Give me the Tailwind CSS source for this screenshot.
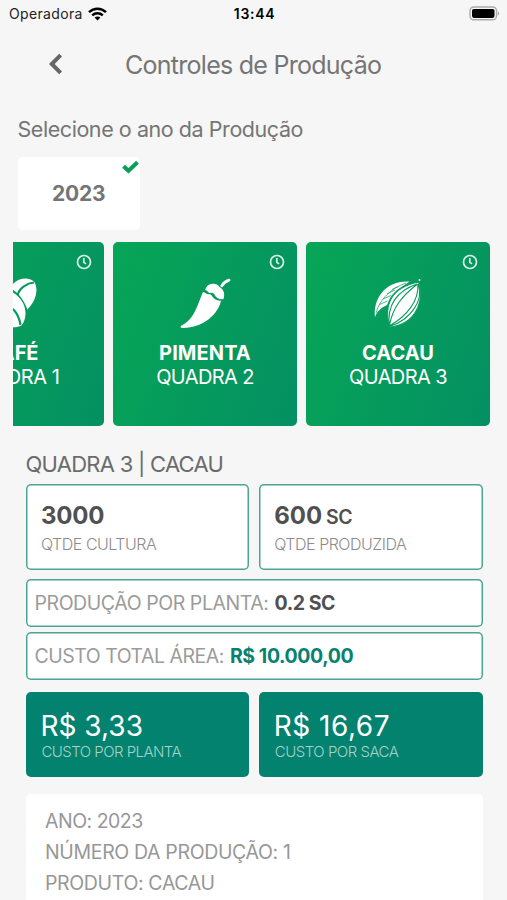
<!DOCTYPE html>
<html lang="pt-BR">
<head>
<meta charset="utf-8">
<title>Controles de Produção</title>
<script src="https://cdn.jsdelivr.net/npm/@tailwindcss/browser@4"></script>
</head>
<body class="h-[900px] w-[507px] overflow-hidden bg-[#f6f6f6] font-['Inter','Liberation_Sans',sans-serif] whitespace-nowrap text-[#757575]">

<!-- Status bar -->
<header class="grid h-7 grid-cols-3 items-center pr-[7px] pl-[9px] text-[14px] leading-7 text-black">
  <div class="flex items-center gap-[5px]">
    <span class="tracking-[0.35px] text-[#222]">Operadora</span>
    <svg class="-mt-px h-[14px] w-[19px]" viewBox="0 0 19 14" fill="none" stroke="#000" stroke-width="2.5"><path d="M1 5.2C5.9.6 13.100.6 18 5.200M4.200 8.300C7.200 5.500 11.800 5.500 14.800 8.300"/><path d="M9.500 13.500 6.600 10.600C8.300 9.100 10.700 9.100 12.400 10.600Z" fill="#000" stroke="none"/></svg>
  </div>
  <span class="text-center font-semibold tracking-[0.7px]">13:44</span>
  <svg class="-mt-[2px] h-[15px] w-[31px] justify-self-end" viewBox="0 0 31 15"><rect x="1" y="1" width="26.500" height="12.800" rx="3.800" fill="#f6f6f6" stroke="#aaa" stroke-width="1.400"/><rect x="3" y="2.900" width="22.500" height="9" rx="1.800"/><path d="M28.800 5.200c2 .8 2 3.600 0 4.400Z" fill="#aaa"/></svg>
</header>

<!-- Title bar -->
<div class="flex h-[72px] items-center pl-12">
  <svg class="h-[22px] w-[15px]" viewBox="0 0 15 22" fill="none" stroke="#666" stroke-width="4"><path d="M12.600 2.200 3.800 11l8.800 8.800"/></svg>
  <h1 class="ml-[62px] pt-px text-[25px] leading-8 tracking-[-0.73px]">Controles de Produção</h1>
</div>

<!-- Year picker -->
<section class="pt-[14px] pl-[17.5px]">
  <h2 class="text-[21.5px] leading-[31px] tracking-[-0.44px]">Selecione o ano da Produção</h2>
  <button class="relative mt-3 flex h-[73px] w-[122.500px] items-center justify-center rounded-[5px] bg-white text-[21px] font-bold tracking-[-0.2px]">2023
    <svg class="absolute top-[3px] right-[1px] h-[14px] w-[17px]" viewBox="0 0 17 14" fill="none" stroke="#0a9f58" stroke-width="4"><path d="M1.500 6.200 6.500 10.800 15.500 2.200"/></svg>
  </button>
</section>

<!-- Plots carousel -->
<section class="mt-3 ml-[13px] flex w-[477px] justify-end gap-[9px] overflow-hidden text-center text-[20px] leading-6 text-white">
  <article class="relative flex h-[184px] w-[184px] shrink-0 flex-col items-center rounded-[5px] bg-linear-[110deg] from-[#07a656] to-[#049063] pt-[35px]">
    <svg class="absolute top-[12px] right-[12px] size-4" viewBox="0 0 16 16" fill="none" stroke="#d9f3e6" stroke-width="1.700"><circle cx="8" cy="8" r="6.500"/><path d="M7.800 4v4.400l2.300 1.500"/></svg>
    <svg class="size-[52px]" viewBox="0 0 52 52" fill="#fff"><path d="M26 8C32 1 42-.5 48 4.500 52.500 11 51 23 41.500 32.500 38 24 34 17 26 12Z"/><path d="M48 5.500C41 6 33.500 11 31.500 18" fill="none" stroke="#059b5d" stroke-width="2.200"/><path d="M8 17C18 8 31 15 37 26 41 34 40 43 35.500 48.500 27 53 13 49 7 38 3 31 3 23 8 17Z"/><path d="M8 18C16 30 31 26 34.500 48" fill="none" stroke="#059b5d" stroke-width="2.200"/></svg>
    <h3 class="mt-[12px] font-bold">CAFÉ</h3>
    <p class="tracking-[-0.47px]">QUADRA 1</p>
  </article>
  <article class="relative flex h-[184px] w-[184px] shrink-0 flex-col items-center rounded-[5px] bg-linear-[110deg] from-[#07a656] to-[#049063] pt-[35px]">
    <svg class="absolute top-[12px] right-[12px] size-4" viewBox="0 0 16 16" fill="none" stroke="#d9f3e6" stroke-width="1.700"><circle cx="8" cy="8" r="6.500"/><path d="M7.800 4v4.400l2.300 1.500"/></svg>
    <svg class="size-[52px]" viewBox="0 0 52 52" fill="#fff"><path d="M24 15c2.500.2 3.500 2.700 5.800 2.300 1.600-.2 2.500.4 3.200 1.800 1.600 3 4.700 4.900 9 4.500C39.500 37 24 51.500 3 51c-1.800-.1-2-1.900-.4-2.400C16 42 18.500 27 24 15Z"/><path d="M26.300 12.700C27.500 5.800 37.500 4.700 40.500 10c4.500 2.500 5.800 7.500 3.800 12.200-4.500.3-7.500-1.200-8.800-4.700-1-1.400-2.700-2-4.600-1.400-1.900-.7-2.900-2.900-4.600-3.400Z"/><path d="M42.800 8.700C44.500 6 46.800 4.100 50 3.100" fill="none" stroke="#fff" stroke-width="2.800" stroke-linecap="round"/></svg>
    <h3 class="mt-[12px] font-bold tracking-[0.1px]">PIMENTA</h3>
    <p class="tracking-[-0.6px]">QUADRA 2</p>
  </article>
  <article class="relative flex h-[184px] w-[184px] shrink-0 flex-col items-center rounded-[5px] bg-linear-[110deg] from-[#07a656] to-[#049063] pt-[35px]">
    <svg class="absolute top-[12px] right-[12px] size-4" viewBox="0 0 16 16" fill="none" stroke="#d9f3e6" stroke-width="1.700"><circle cx="8" cy="8" r="6.500"/><path d="M7.800 4v4.400l2.300 1.500"/></svg>
    <svg class="size-[52px]" viewBox="0 0 52 52" fill="#fff"><path d="M3 40C1 21 14 3 37.500 4.500 32 9 23 12 17.500 22L15 28C9 31 5 34 3 40Z"/><path d="M4 36C8 22 18 12 34 6M7.500 27.500l8-3.500M11 22l8-3.500M15 17l8-4M20 12.500l6-3" fill="none" stroke="#059b5d" stroke-width=".7"/><path d="M46.500 5C53 24 43 48 17.300 50 12 27 19 11 46.500 5Z" stroke="#059b5d" stroke-width="1"/><path d="M45 7C25 14 15 28 17.300 49M46 7C47 24 35 39 17.300 49M46.500 7C52 24 38 43 18 49.300M45.500 7C30 19 21 30 17.500 48" fill="none" stroke="#059b5d" stroke-width="1.100"/><circle cx="47.500" cy="3" r="1"/></svg>
    <h3 class="mt-[12px] font-bold">CACAU</h3>
    <p class="tracking-[-0.6px]">QUADRA 3</p>
  </article>
</section>

<!-- Selected plot -->
<main class="pt-[26px] pr-[24.500px] pl-[25.500px]">
  <h2 class="text-[22px] leading-6 tracking-[-0.74px] text-[#6b6b6b]">QUADRA 3 | CACAU</h2>
  <div class="mt-2 grid grid-cols-2 gap-[9.500px]">
    <div class="h-[85.500px] rounded-[5px] bg-white pt-[17px] pl-[15.500px] shadow-[inset_0_0_0_1.5px_#4aa594]">
      <p class="text-[24px] leading-[30px] font-bold tracking-[-0.2px] text-[#505050]">3000</p>
      <p class="text-[16px] leading-[27px] font-light tracking-[-0.48px] text-[#8c8c8c]">QTDE CULTURA</p>
    </div>
    <div class="h-[85.500px] rounded-[5px] bg-white pt-[17px] pl-[15.500px] shadow-[inset_0_0_0_1.5px_#4aa594]">
      <p class="h-[30px] text-[24px] leading-[30px] font-bold text-[#505050]">600 <span class="-ml-[2px] text-[19.500px] font-semibold tracking-[-0.3px]">SC</span></p>
      <p class="text-[16px] leading-[27px] font-light tracking-[-0.48px] text-[#8c8c8c]">QTDE PRODUZIDA</p>
    </div>
  </div>
  <p class="mt-[9px] flex h-[48.500px] items-center gap-[6px] rounded-[5px] bg-white pt-px pl-[9px] text-[19.500px] tracking-[-0.43px] text-[#9b9b9b] shadow-[inset_0_0_0_1.5px_#4aa594]">PRODUÇÃO POR PLANTA: <b class="text-[#505050]">0.2 SC</b></p>
  <p class="mt-[4.500px] flex h-[48.500px] items-center gap-[6px] rounded-[5px] bg-white pt-px pl-[9px] text-[19.500px] tracking-[-0.49px] text-[#9b9b9b] shadow-[inset_0_0_0_1.5px_#4aa594]">CUSTO TOTAL ÁREA: <b class="tracking-[-0.4px] text-[#078270]">R$ 10.000,00</b></p>
  <div class="mt-3 grid grid-cols-2 gap-[9.500px] text-white">
    <div class="h-[84.500px] rounded-[5px] bg-[#038270] pt-[18px] pl-[15px]">
      <p class="text-[28px] leading-8">R$ 3,33</p>
      <p class="pl-px text-[15px] leading-5 font-light tracking-[-0.55px] text-[#a5d2ca]">CUSTO POR PLANTA</p>
    </div>
    <div class="h-[84.500px] rounded-[5px] bg-[#038270] pt-[18px] pl-[15px]">
      <p class="text-[28px] leading-8 tracking-[0.5px]">R$ 16,67</p>
      <p class="pl-px text-[15px] leading-5 font-light tracking-[-0.5px] text-[#a5d2ca]">CUSTO POR SACA</p>
    </div>
  </div>
  <div class="mt-[17px] h-[107px] rounded-t-[5px] bg-white pt-3 pl-[19.500px] text-[19.500px] leading-[31px] tracking-[-0.35px] text-[#979797]">
    <p class="tracking-[-0.5px]">ANO: 2023</p>
    <p>NÚMERO DA PRODUÇÃO: 1</p>
    <p>PRODUTO: CACAU</p>
  </div>
</main>
</body>
</html>
